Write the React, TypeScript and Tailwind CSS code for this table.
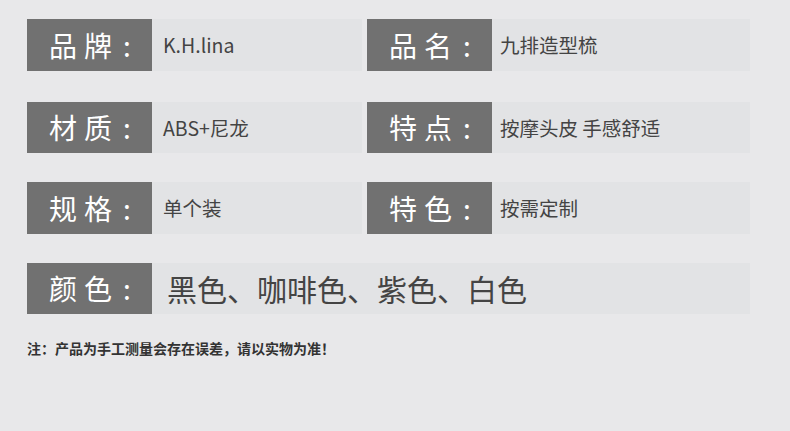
const font = { fontFamily: '"Noto Sans CJK SC", "Noto Sans", sans-serif' };

const Label = ({ text }: { text: string }) => (
  <div className="flex h-full w-[125px] shrink-0 items-center bg-[#717171] pb-[1px] pl-[22px] text-[28px] leading-none tracking-[7px] text-white">
    {text}
    <span className="ml-[4px]">:</span>
  </div>
);

const Cell = ({ label, value, pad }: { label: string; value: string; pad: string }) => (
  <div className="flex h-full">
    <Label text={label} />
    <div className={`flex flex-1 items-center bg-[#e2e3e5] text-[19.5px] text-[#444] ${pad}`}>
      {value}
    </div>
  </div>
);

export default function App() {
  return (
    <div className="h-[431px] w-[790px] bg-[#e8e8ea] pl-[27px] pt-[19px]" style={font}>
      <div className="grid h-[52px] w-[723px] grid-cols-[335px_383px] gap-[5px]">
        <Cell label="品牌" value="K.H.lina" pad="pl-[11px]" />
        <Cell label="品名" value="九排造型梳" pad="pl-[8px]" />
      </div>
      <div className="mt-[31px] grid h-[51px] w-[723px] grid-cols-[335px_383px] gap-[5px]">
        <Cell label="材质" value="ABS+尼龙" pad="pl-[11px]" />
        <Cell label="特点" value="按摩头皮 手感舒适" pad="pl-[8px]" />
      </div>
      <div className="mt-[29px] grid h-[52px] w-[723px] grid-cols-[335px_383px] gap-[5px]">
        <Cell label="规格" value="单个装" pad="pl-[11px]" />
        <Cell label="特色" value="按需定制" pad="pl-[8px]" />
      </div>
      <div className="mt-[29px] flex h-[51px] w-[723px]">
        <Label text="颜色" />
        <div className="flex flex-1 items-center bg-[#e2e3e5] pl-[15px] text-[30px] text-[#444]">
          黑色、咖啡色、紫色、白色
        </div>
      </div>
      <p className="mt-[24px] text-[14px] font-bold text-[#333]">注：产品为手工测量会存在误差，请以实物为准！</p>
    </div>
  );
}
